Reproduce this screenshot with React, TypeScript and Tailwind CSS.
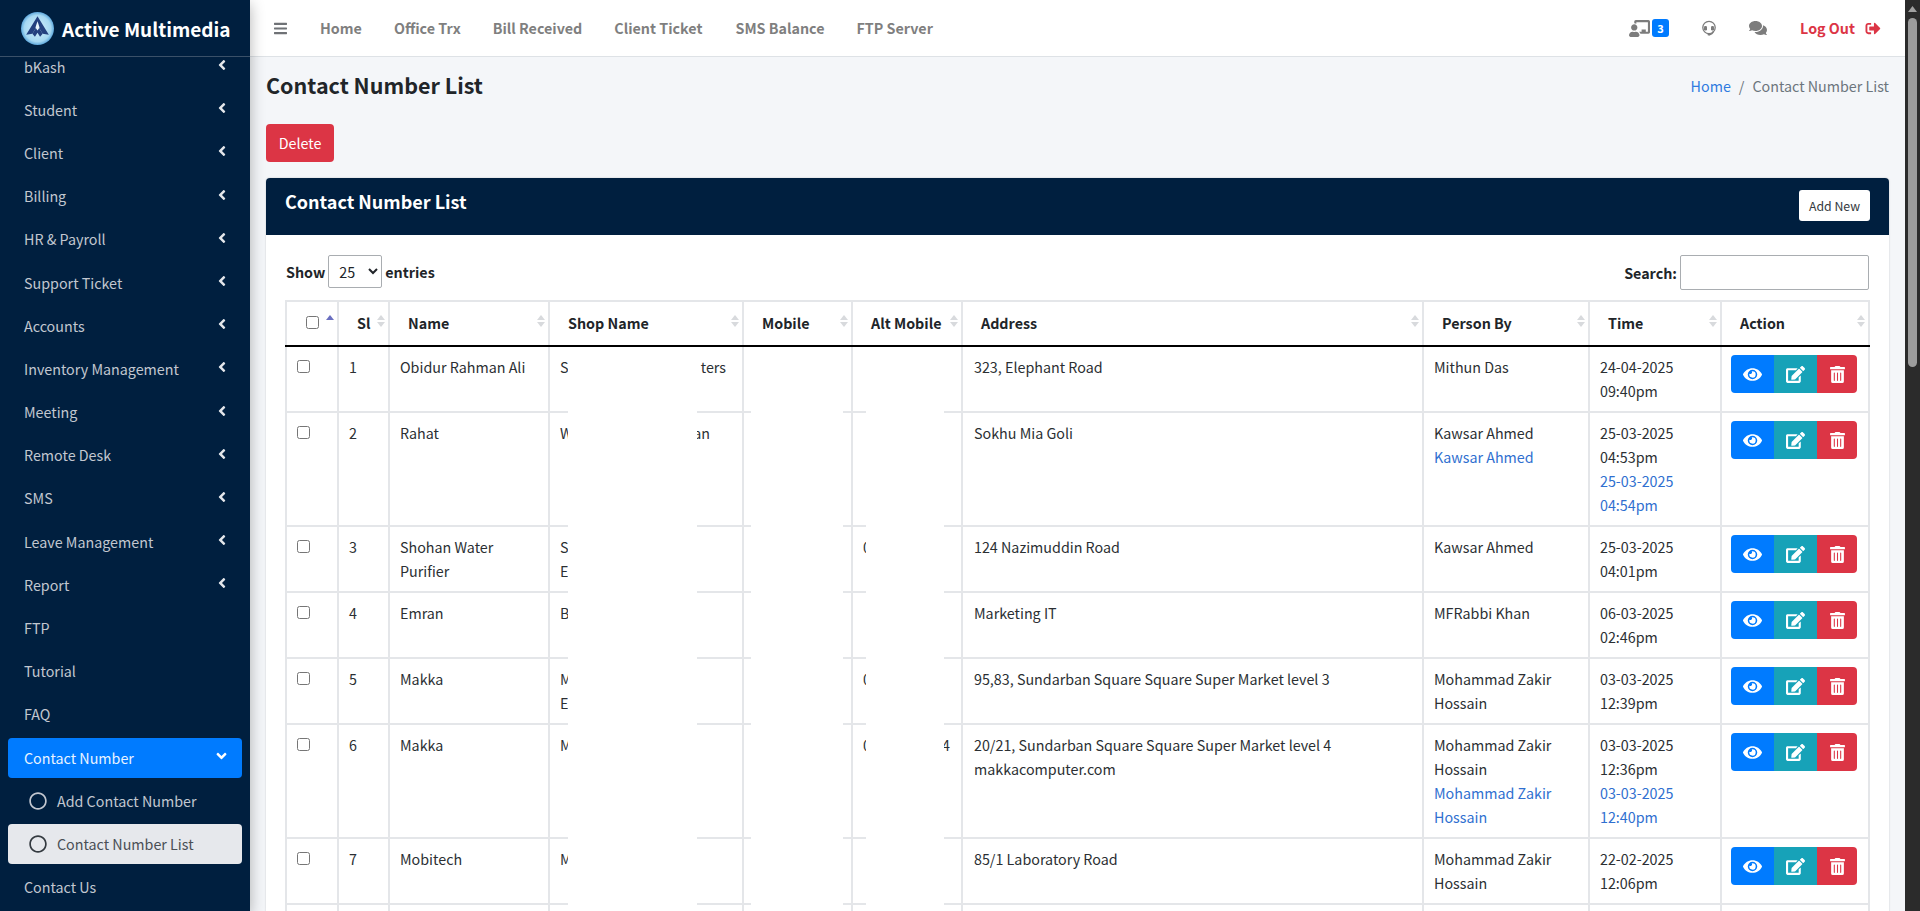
import {
  FaAngleDown,
  FaAngleLeft,
  FaBars,
  FaChalkboardTeacher,
  FaComments,
  FaEdit,
  FaEye,
  FaRegCircle,
  FaSignOutAlt,
  FaTrashAlt,
} from "react-icons/fa";

const menu = [
  { label: "bKash", arrow: true },
  { label: "Student", arrow: true },
  { label: "Client", arrow: true },
  { label: "Billing", arrow: true },
  { label: "HR & Payroll", arrow: true },
  { label: "Support Ticket", arrow: true },
  { label: "Accounts", arrow: true },
  { label: "Inventory Management", arrow: true },
  { label: "Meeting", arrow: true },
  { label: "Remote Desk", arrow: true },
  { label: "SMS", arrow: true },
  { label: "Leave Management", arrow: true },
  { label: "Report", arrow: true },
  { label: "FTP", arrow: false },
  { label: "Tutorial", arrow: false },
  { label: "FAQ", arrow: false },
];

const topLinks = [
  { label: "Home", cls: "ml-[33px]" },
  { label: "Office Trx", cls: "ml-[32px]" },
  { label: "Bill Received", cls: "ml-[32px]" },
  { label: "Client Ticket", cls: "ml-[32px]" },
  { label: "SMS Balance", cls: "ml-[33px]" },
  { label: "FTP Server", cls: "ml-[32px]" },
];

const columns = [
  { label: "", w: "w-[52px]" },
  { label: "Sl", w: "w-[51px]" },
  { label: "Name", w: "w-[160px]" },
  { label: "Shop Name", w: "w-[194px]" },
  { label: "Mobile", w: "w-[109px]" },
  { label: "Alt Mobile", w: "w-[110px]" },
  { label: "Address", w: "w-[461px]" },
  { label: "Person By", w: "w-[166px]" },
  { label: "Time", w: "w-[132px]" },
  { label: "Action", w: "w-[148px]" },
];

const rows = [
  {
    sl: 1,
    name: "Obidur Rahman Ali",
    shop: ["S", "ters"],
    shopPad: "pr-[5px]",
    alt: [] as string[],
    address: ["323, Elephant Road"],
    person: "Mithun Das",
    time: ["24-04-2025", "09:40pm"],
  },
  {
    sl: 2,
    name: "Rahat",
    shop: ["W", "an"],
    shopPad: "pr-[21px]",
    alt: [],
    address: ["Sokhu Mia Goli"],
    person: "Kawsar Ahmed",
    editor: "Kawsar Ahmed",
    time: ["25-03-2025", "04:53pm"],
    edited: ["25-03-2025", "04:54pm"],
  },
  {
    sl: 3,
    name: "Shohan Water Purifier",
    shop: ["S"],
    shop2: "E",
    alt: ["0"],
    address: ["124 Nazimuddin Road"],
    person: "Kawsar Ahmed",
    time: ["25-03-2025", "04:01pm"],
  },
  {
    sl: 4,
    name: "Emran",
    shop: ["B"],
    alt: [],
    address: ["Marketing IT"],
    person: "MFRabbi Khan",
    time: ["06-03-2025", "02:46pm"],
  },
  {
    sl: 5,
    name: "Makka",
    shop: ["M"],
    shop2: "E",
    alt: ["0"],
    address: ["95,83, Sundarban Square Square Super Market level 3"],
    person: "Mohammad Zakir Hossain",
    time: ["03-03-2025", "12:39pm"],
  },
  {
    sl: 6,
    name: "Makka",
    shop: ["M"],
    alt: ["0", "4"],
    address: ["20/21, Sundarban Square Square Super Market level 4", "makkacomputer.com"],
    person: "Mohammad Zakir Hossain",
    editor: "Mohammad Zakir Hossain",
    time: ["03-03-2025", "12:36pm"],
    edited: ["03-03-2025", "12:40pm"],
  },
  {
    sl: 7,
    name: "Mobitech",
    shop: ["M"],
    alt: [],
    address: ["85/1 Laboratory Road"],
    person: "Mohammad Zakir Hossain",
    time: ["22-02-2025", "12:06pm"],
  },
];

function Logo() {
  return (
    <svg viewBox="0 0 32 32" className="h-[33px] w-[33px] shrink-0">
      <defs>
        <radialGradient id="logo-bg" cx="50%" cy="50%" r="50%">
          <stop offset="0%" stopColor="#d5eefb" />
          <stop offset="80%" stopColor="#a6d8f2" />
          <stop offset="100%" stopColor="#5fa8dc" />
        </radialGradient>
      </defs>
      <circle cx="16" cy="16" r="16" fill="url(#logo-bg)" />
      <path d="M16 4 L27 22 L21 21 L16 13 L11 21 L5 22 Z" fill="#24407f" />
      <path d="M16 13 L21 21 L18.5 24 L16 20 L13.5 24 L11 21 Z" fill="#24407f" />
      <path d="M16 9 L18 15 L16 18 L14 15 Z" fill="#eaf6fd" />
    </svg>
  );
}

function HeadsetIcon() {
  return (
    <svg viewBox="0 0 16 16" className="ml-[32px] h-[16px] w-[16px] text-[#7c7c7c]" fill="none">
      <circle cx="8" cy="7.5" r="6.2" stroke="currentColor" strokeWidth="1.3" />
      <rect x="3" y="6" width="3" height="4.5" rx="1.2" fill="currentColor" />
      <rect x="10" y="6" width="3" height="4.5" rx="1.2" fill="currentColor" />
      <path d="M12.5 11 Q11.5 14.6 8 14.6" stroke="currentColor" strokeWidth="1.3" />
      <rect x="6.5" y="13.6" width="3" height="2" rx="1" fill="currentColor" />
    </svg>
  );
}

function Sidebar() {
  return (
    <aside className="relative z-10 flex h-full w-[250px] shrink-0 flex-col bg-[#001f3f] shadow-[0_4px_14px_rgba(0,0,0,0.3)]">
      <div className="relative z-10 flex h-[57px] shrink-0 items-center gap-[8px] border-b border-[#3a5068] bg-[#001f3f] pl-[21px]">
        <Logo />
        <span className="text-[19px] font-bold leading-none text-white">Active Multimedia</span>
      </div>
      <nav className="-mt-[10.4px] flex flex-col gap-[3.2px] px-[8px] text-[14.3px] leading-6 text-[#c2c7d0]">
        {menu.map((item) => (
          <div key={item.label} className="flex h-[40px] items-center justify-between pl-[16px] pr-[14px]">
            <span>{item.label}</span>
            {item.arrow && <FaAngleLeft className="-mt-[3px] h-[16px] w-[12px] text-[#e4e7eb]" />}
          </div>
        ))}
        <div className="flex h-[40px] items-center justify-between rounded bg-[#007bff] pl-[16px] pr-[14px] text-[#e9f3ff]">
          <span>Contact Number</span>
          <FaAngleDown className="-mt-[3px] h-[16px] w-[13px] text-white" />
        </div>
        <div className="flex h-[40px] items-center gap-[10px] pl-[21px]">
          <FaRegCircle className="h-[18px] w-[18px]" />
          <span>Add Contact Number</span>
        </div>
        <div className="flex h-[40px] items-center gap-[10px] rounded bg-[#e6e8ec] pl-[21px] text-[#4a4f55]">
          <FaRegCircle className="h-[18px] w-[18px] text-[#343a40]" />
          <span>Contact Number List</span>
        </div>
        <div className="flex h-[40px] items-center pl-[16px]">
          <span>Contact Us</span>
        </div>
      </nav>
    </aside>
  );
}

function Topbar() {
  return (
    <header className="flex h-[57px] shrink-0 items-center border-b border-[#dee2e6] bg-white pl-[24px] pr-[24px]">
      <FaBars className="h-[15px] w-[13px] text-[#6f7276]" />
      {topLinks.map((link) => (
        <span key={link.label} className={`${link.cls} text-[14.3px] font-semibold leading-6 text-[#7f7f7f]`}>
          {link.label}
        </span>
      ))}
      <div className="ml-auto flex items-center">
        <FaChalkboardTeacher className="h-[17px] w-[21px] text-[#7c7c7c]" />
        <span className="ml-[2px] flex h-[18px] w-[17px] items-center justify-center rounded-[3px] bg-[#007bff] text-[11px] font-bold leading-none text-white">
          3
        </span>
        <HeadsetIcon />
        <FaComments className="ml-[32px] h-[16px] w-[18px] text-[#7c7c7c]" />
        <span className="ml-[33px] text-[14.3px] font-bold leading-6 text-[#dc3545]">Log Out</span>
        <FaSignOutAlt className="ml-[10px] h-[15px] w-[16px] text-[#dc3545]" />
      </div>
    </header>
  );
}

function SortArrows({ active }: { active?: boolean }) {
  return (
    <span className="absolute right-[3px] top-[13px] flex flex-col gap-[2px]">
      <svg viewBox="0 0 8 5" className="h-[5px] w-[8px]">
        <path d="M4 0 L8 5 L0 5 Z" fill={active ? "#6a6fc0" : "#d8dadd"} />
      </svg>
      <svg viewBox="0 0 8 5" className="h-[5px] w-[8px]">
        <path d="M0 0 L8 0 L4 5 Z" fill={active ? "#ffffff" : "#d8dadd"} />
      </svg>
    </span>
  );
}

function ActionButtons() {
  return (
    <div className="flex h-[38px] w-[126px] overflow-hidden rounded text-white">
      <span className="flex w-[43px] items-center justify-center bg-[#007bff]">
        <FaEye className="h-[17px] w-[19px]" />
      </span>
      <span className="flex w-[43px] items-center justify-center bg-[#17a2b8]">
        <FaEdit className="h-[17px] w-[19px]" />
      </span>
      <span className="flex w-[40px] items-center justify-center bg-[#dc3545]">
        <FaTrashAlt className="h-[17px] w-[15px]" />
      </span>
    </div>
  );
}

function ContactTable() {
  const cell = "border-2 border-[#e4e6e9] pl-[10px] pr-[11px] py-2 align-top";
  return (
    <div className="relative">
      <table className="w-[1583px] table-fixed border-collapse text-[14.3px] leading-6 text-[#2b2f33]">
        <colgroup>
          {columns.map((c) => (
            <col key={c.label} className={c.w} />
          ))}
        </colgroup>
        <thead>
          <tr>
            {columns.map((c, i) => (
              <th
                key={c.label}
                className="relative h-[45px] border-2 border-[#e4e6e9] border-b-black pb-[2px] pl-[18px] pr-[8px] text-left align-middle font-bold text-[#212529]"
              >
                {i === 0 ? (
                  <input type="checkbox" className="ml-[1px] block h-[13px] w-[13px]" readOnly />
                ) : (
                  c.label
                )}
                <SortArrows active={i === 0} />
              </th>
            ))}
          </tr>
        </thead>
        <tbody>
          {rows.map((r) => (
            <tr key={r.sl}>
              <td className={cell}>
                <input type="checkbox" className="mt-[5px] block h-[13px] w-[13px]" readOnly />
              </td>
              <td className={cell}>{r.sl}</td>
              <td className={cell}>{r.name}</td>
              <td className={cell}>
                <div className={`flex justify-between ${r.shopPad ?? ""}`}>
                  <span>{r.shop[0]}</span>
                  <span>{r.shop[1]}</span>
                </div>
                {r.shop2 && <div>{r.shop2}</div>}
              </td>
              <td className={cell}></td>
              <td className={cell}>
                <div className="flex justify-between">
                  <span>{r.alt[0]}</span>
                  <span>{r.alt[1]}</span>
                </div>
              </td>
              <td className="border-2 border-[#e4e6e9] px-[11px] py-2 align-top">
                {r.address.map((line) => (
                  <div key={line}>{line}</div>
                ))}
              </td>
              <td className={cell}>
                <div>{r.person}</div>
                {r.editor && <div className="text-[#2f6fd0]">{r.editor}</div>}
              </td>
              <td className={cell}>
                {r.time.map((line) => (
                  <div key={line}>{line}</div>
                ))}
                {r.edited?.map((line) => (
                  <div key={line} className="text-[#2f6fd0]">
                    {line}
                  </div>
                ))}
              </td>
              <td className="border-2 border-[#e4e6e9] py-2 pl-[9px] align-top">
                <ActionButtons />
              </td>
            </tr>
          ))}
          <tr>
            {columns.map((c) => (
              <td key={c.label} className={`${cell} h-[66px]`}></td>
            ))}
          </tr>
        </tbody>
      </table>
      {/* blanked out parts of the screenshot */}
      <div className="absolute bottom-0 left-[283px] top-[47px] w-[129px] bg-white" />
      <div className="absolute bottom-0 left-[466px] top-[47px] w-[92px] bg-white" />
      <div className="absolute bottom-0 left-[581px] top-[47px] w-[78px] bg-white" />
    </div>
  );
}

function Scrollbar() {
  return (
    <div className="flex h-full w-[15px] shrink-0 flex-col items-center bg-[#2b2b2b] pt-[6px]">
      <svg viewBox="0 0 9 6" className="h-[6px] w-[9px]">
        <path d="M4.5 0 L9 6 L0 6 Z" fill="#a0a0a0" />
      </svg>
      <div className="mt-[6px] h-[349px] w-[9px] rounded-full bg-[#9c9c9c]" />
    </div>
  );
}

export default function App() {
  return (
    <div className="flex h-[911px] w-full overflow-hidden bg-[#f4f6f9] font-['Noto_Sans_CJK_SC','Source_Sans_Pro',sans-serif]">
      <Sidebar />
      <div className="flex min-w-0 flex-1 flex-col overflow-hidden">
        <Topbar />
        <main className="flex flex-col px-[16px]">
          <div className="flex h-[67px] items-center justify-between pb-[10px]">
            <h1 className="-mt-[2px] text-[21.5px] font-semibold leading-none text-[#212529]">Contact Number List</h1>
            <div className="flex items-center gap-[8px] text-[14.3px] leading-6 text-[#6c757d]">
              <span className="text-[#2f7be0]">Home</span>
              <span>/</span>
              <span>Contact Number List</span>
            </div>
          </div>
          <div>
            <button className="h-[38px] w-[68px] rounded bg-[#dc3545] text-[14.3px] leading-6 text-white">Delete</button>
          </div>
          <section className="mt-[16px] rounded bg-white shadow-[0_0_2px_rgba(0,0,0,0.2)]">
            <div className="flex h-[57px] items-start justify-between rounded-t bg-[#001f3f] pl-[19px] pr-[19px] pt-[12px]">
              <h3 className="-mt-[1px] text-[18px] font-bold leading-6 text-white">Contact Number List</h3>
              <button className="h-[31px] w-[71px] rounded-[3px] bg-white text-[12.3px] leading-5 text-[#343a40]">
                Add New
              </button>
            </div>
            <div className="px-[19px] pt-[20px]">
              <div className="flex items-center justify-between pr-[1px] text-[14.3px] font-bold leading-6 text-[#212529]">
                <label className="-mt-[2px] flex items-center gap-[3px] pl-[1px]">
                  <span>Show</span>
                  <select className="h-[33px] w-[54px] rounded-[2px] border border-[#a9adb1] bg-white pl-[6px] text-[14.3px] font-normal" defaultValue="25">
                    <option value="25">25</option>
                  </select>
                  <span>entries</span>
                </label>
                <label className="flex items-center gap-[3px]">
                  <span>Search:</span>
                  <input className="h-[35px] w-[189px] rounded-[2px] border border-[#a9adb1] bg-white" />
                </label>
              </div>
              <div className="mt-[10px]">
                <ContactTable />
              </div>
            </div>
          </section>
        </main>
      </div>
      <Scrollbar />
    </div>
  );
}
